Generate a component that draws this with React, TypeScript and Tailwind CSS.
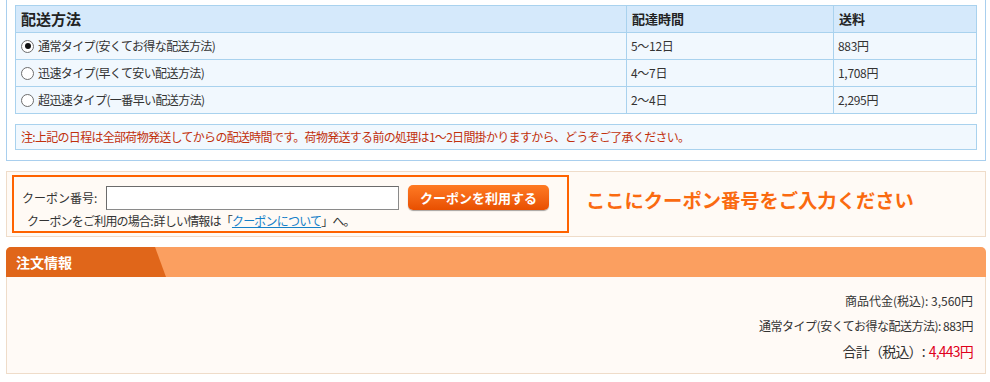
import React from "react";

const font = { fontFamily: '"Noto Sans CJK JP", "Noto Sans", sans-serif' };

function Radio({ checked }: { checked?: boolean }) {
  return (
    <span className="w-[13px] h-[13px] rounded-full border border-[#6d6d6d] bg-white flex items-center justify-center shrink-0">
      {checked && <span className="w-[6px] h-[6px] rounded-full bg-[#111]" />}
    </span>
  );
}

const rows = [
  { name: "通常タイプ(安くてお得な配送方法)", time: "5〜12日", fee: "883円", checked: true },
  { name: "迅速タイプ(早くて安い配送方法)", time: "4〜7日", fee: "1,708円" },
  { name: "超迅速タイプ(一番早い配送方法)", time: "2〜4日", fee: "2,295円" },
];

export default function App() {
  return (
    <div className="w-[990px] h-[382px] bg-white text-[#333] text-[12px]" style={font}>
      {/* shipping panel */}
      <div className="ml-[6px] w-[980px] border-x border-b border-[#a9cfee] pl-[8px] pt-[5px] pb-[10px]">
        <div className="w-[962px] border-t border-l border-[#a9d2ee] grid grid-cols-[611px_207px_143px]">
          <div className="h-[27px] border-r border-b border-[#a9d2ee] bg-[#d5e9fb] flex items-center pl-[5px] text-[15px] font-bold text-[#222]">配送方法</div>
          <div className="h-[27px] border-r border-b border-[#a9d2ee] bg-[#d5e9fb] flex items-center pl-[5px] text-[13px] font-bold text-[#222]">配達時間</div>
          <div className="h-[27px] border-r border-b border-[#a9d2ee] bg-[#d5e9fb] flex items-center pl-[5px] text-[13px] font-bold text-[#222]">送料</div>
          {rows.map((r) => (
            <React.Fragment key={r.name}>
              <div className="h-[27px] border-r border-b border-[#a9d2ee] bg-[#f1f8fe] flex items-center pl-[5px] gap-[4px] tracking-[-0.6px]">
                <Radio checked={r.checked} />
                <span>{r.name}</span>
              </div>
              <div className="h-[27px] border-r border-b border-[#a9d2ee] bg-[#f1f8fe] flex items-center pl-[4px] tracking-[-0.3px]">{r.time}</div>
              <div className="h-[27px] border-r border-b border-[#a9d2ee] bg-[#f1f8fe] flex items-center pl-[4px] tracking-[-0.3px]">{r.fee}</div>
            </React.Fragment>
          ))}
        </div>
        <div className="mt-[10px] w-[962px] h-[26px] border border-[#a9d2ee] bg-[#f1f8fe] flex items-center pl-[5px] text-[#c1300c] tracking-[-0.7px]">
          注:上記の日程は全部荷物発送してからの配送時間です。荷物発送する前の処理は1〜2日間掛かりますから、どうぞご了承ください。
        </div>
      </div>

      {/* coupon */}
      <div className="mt-[10px] ml-[6px] w-[980px] h-[66px] border border-[#efdcc9] bg-[#fffaf5] pl-[5px] pt-[3px] flex items-start">
        <div className="w-[557px] h-[58px] border-2 border-[#ff6300] pl-[8px] pt-[8px]">
          <div className="flex items-center">
            <span className="w-[84px]">クーポン番号:</span>
            <div className="w-[293px] h-[24px] bg-white border border-[#8a8a8a] border-t-[#6b6b6b] border-l-[#6b6b6b]" />
            <button className="ml-[9px] w-[141px] h-[25px] rounded-[5px] bg-gradient-to-b from-[#ff7a22] to-[#e84f00] text-white font-bold text-[13px] shadow-[0_1px_1px_rgba(0,0,0,0.35)]">
              クーポンを利用する
            </button>
          </div>
          <div className="mt-[2px] pl-[5px] tracking-[-0.8px]">
            クーポンをご利用の場合<span className="tracking-normal">:</span>詳しい情報は「<span className="text-[#1580c8] underline">クーポンについて</span>」へ。
          </div>
        </div>
        <div className="ml-[17px] mt-[16px] text-[19.3px] font-bold text-[#fa6a10] leading-none">
          ここにクーポン番号をご入力ください
        </div>
      </div>

      {/* order info */}
      <div className="mt-[10px] ml-[6px] w-[980px]">
        <div className="h-[30px] rounded-t-[5px] bg-[#fb9f60] flex overflow-hidden">
          <div className="w-[160px] h-full bg-[#e0661a] [clip-path:polygon(0_0,149px_0,160px_100%,0_100%)] flex items-center pl-[10px] text-white font-bold text-[14px]">
            注文情報
          </div>
        </div>
        <div className="h-[97px] border border-t-0 border-[#efdcc9] bg-[#fffaf6] pr-[12px] pt-[11px] flex flex-col items-end">
          <div className="leading-[25px]">商品代金(税込): 3,560円</div>
          <div className="leading-[25px] tracking-[-0.5px]">通常タイプ(安くてお得な配送方法): 883円</div>
          <div className="leading-[26px] text-[14px] tracking-[-0.8px]">
            合計（税込）<span className="tracking-normal">: </span><span className="text-[#e0001a]">4,443円</span>
          </div>
        </div>
      </div>
    </div>
  );
}
